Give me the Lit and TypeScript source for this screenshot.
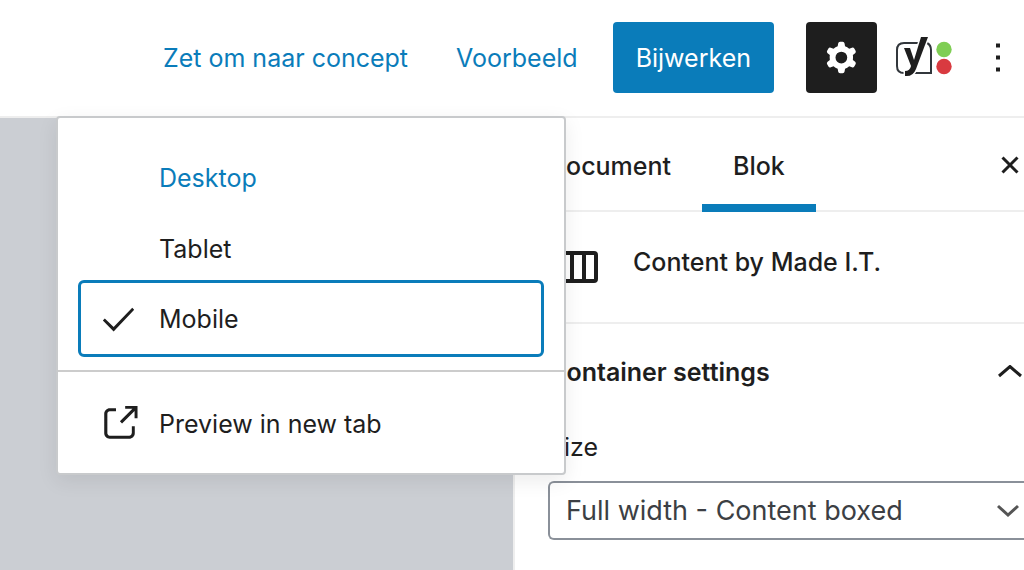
import { LitElement, html, css, svg } from "lit";
import { customElement, state } from "lit/decorators.js";
import { classMap } from "lit/directives/class-map.js";

const checkIcon = svg`<path d="M9 18.6L3.5 13l1-1L9 16.4l9.5-9.9 1 1z" />`;
const externalIcon = svg`<path d="M18.2 17c0 .7-.6 1.2-1.2 1.2H7c-.7 0-1.2-.6-1.2-1.2V7c0-.7.6-1.2 1.2-1.2h3.2V4.2H7C5.5 4.2 4.2 5.5 4.2 7v10c0 1.5 1.2 2.8 2.8 2.8h10c1.5 0 2.8-1.2 2.8-2.8v-3.6h-1.5V17zM14.9 3v1.5h3.7l-6.4 6.4 1.1 1.1 6.4-6.4v3.7h1.5V3h-6.3z" />`;
const cogIcon = svg`<path fill-rule="evenodd" d="M10.289 4.836A1 1 0 0111.275 4h1.306a1 1 0 01.987.836l.244 1.466c.787.26 1.503.679 2.108 1.218l1.393-.522a1 1 0 011.216.437l.653 1.13a1 1 0 01-.23 1.273l-1.148.944a6.025 6.025 0 010 2.435l1.149.946a1 1 0 01.23 1.272l-.653 1.13a1 1 0 01-1.216.437l-1.394-.522c-.605.54-1.32.958-2.108 1.218l-.244 1.466a1 1 0 01-.987.836h-1.306a1 1 0 01-.986-.836l-.244-1.466a5.995 5.995 0 01-2.108-1.218l-1.394.522a1 1 0 01-1.217-.436l-.653-1.131a1 1 0 01.23-1.272l1.149-.946a6.026 6.026 0 010-2.435l-1.148-.944a1 1 0 01-.23-1.272l.653-1.131a1 1 0 011.217-.437l1.393.522a5.994 5.994 0 012.108-1.218l.244-1.466zM14.929 12a3 3 0 11-6 0 3 3 0 016 0z" />`;

@customElement("app-root")
export class AppRoot extends LitElement {
  @state() private device = "Mobile";

  static styles = css`
    :host {
      display: flex;
      flex-direction: column;
      position: relative;
      min-height: 100vh;
      overflow: hidden;
      background: #fff;
      color: #1e1e1e;
      font: 25px/32px Inter, "Liberation Sans", sans-serif;
    }
    * {
      box-sizing: border-box;
    }
    button {
      padding: 0;
      border: 0;
      background: none;
      color: inherit;
      font: inherit;
      cursor: pointer;
    }
    svg {
      display: block;
      flex: none;
      fill: currentColor;
    }
    .icon {
      width: 47px;
      height: 47px;
    }
    .header {
      display: flex;
      align-items: center;
      justify-content: flex-end;
      height: 118px;
      padding: 0 14px 2px 0;
      border-bottom: 2px solid #eee;
    }
    .header .link {
      margin-right: 48px;
      padding-top: 2px;
      color: #0a7cba;
    }
    .header .preview {
      margin-right: 35px;
    }
    .header .primary {
      height: 71px;
      padding: 2px 23px 0;
      margin-right: 32px;
      border-radius: 4px;
      background: #0a7cba;
      color: #fff;
    }
    .header .settings {
      display: grid;
      place-items: center;
      width: 71px;
      height: 71px;
      margin-right: 18px;
      border-radius: 4px;
      background: #1e1e1e;
      color: #fff;
    }
    .header .seo {
      margin-right: 33px;
    }
    .main {
      display: flex;
      flex: 1;
    }
    .canvas {
      flex: 1;
      background: #cbced3;
    }
    .sidebar {
      width: 511px;
      border-left: 2px solid #eee;
    }
    .tabs {
      display: flex;
      align-items: stretch;
      height: 94px;
      padding-left: 2px;
      border-bottom: 2px solid #eee;
      font-weight: 500;
    }
    .tab {
      padding: 2px 31px 0;
      height: 94px;
    }
    .tab.active {
      border-bottom: 8px solid #0a7cba;
      padding-top: 10px;
    }
    .close {
      margin-left: auto;
      padding: 2px 4px 0 0;
    }
    .card {
      display: flex;
      align-items: flex-start;
      gap: 35px;
      height: 112px;
      padding: 34px 0 0 41px;
      border-bottom: 2px solid #eee;
    }
    .card svg {
      margin-top: 5px;
    }
    h2 {
      margin: 0;
      font-size: 25px;
      font-weight: 500;
      line-height: 32px;
    }
    .panel-title {
      display: flex;
      align-items: center;
      justify-content: space-between;
      width: 100%;
      padding: 32px 2px 0 33px;
      font-weight: 600;
    }
    .field {
      display: flex;
      flex-direction: column;
      gap: 18px;
      padding: 43px 0 0 33px;
    }
    .select {
      display: grid;
      align-items: center;
    }
    .select > * {
      grid-area: 1 / 1;
    }
    .select svg {
      justify-self: end;
      margin-right: 5px;
      color: #555;
      pointer-events: none;
    }
    select {
      appearance: none;
      width: 100%;
      height: 59px;
      padding: 0 40px 0 16px;
      border: 2px solid #8a9099;
      border-right: 0;
      border-radius: 6px 0 0 6px;
      background: #fff;
      color: #3c3f44;
      font: inherit;
      font-size: 27px;
    }
    .menu {
      position: absolute;
      top: 116px;
      left: 56px;
      width: 510px;
      border: 2px solid #c8cacc;
      border-radius: 4px;
      background: #fff;
      box-shadow: 0 6px 20px rgba(0, 0, 0, 0.08);
    }
    .group {
      padding: 24px 20px 13px;
    }
    .group + .group {
      padding: 16px 20px 14px;
      border-top: 2px solid #ccc;
    }
    .item {
      display: grid;
      grid-template-columns: 47px 1fr;
      align-items: center;
      column-gap: 16px;
      width: 100%;
      height: 71px;
      padding: 0 18px;
      text-align: left;
    }
    .item .label {
      grid-column: 2;
    }
    .item.hovered {
      color: #0a7cba;
    }
    .item.selected {
      height: 77px;
      margin-top: -4px;
      padding: 0 15px;
      border: 3px solid #0a7cba;
      border-radius: 6px;
    }
  `;

  private renderDevice(name: string) {
    const selected = this.device === name;
    return html`<button
      class=${classMap({ item: true, selected, hovered: name === "Desktop" })}
      role="menuitemradio"
      aria-checked=${selected}
      @click=${() => (this.device = name)}
    >
      ${selected ? html`<svg class="icon" viewBox="0 0 24 24">${checkIcon}</svg>` : ""}
      <span class="label">${name}</span>
    </button>`;
  }

  render() {
    return html`
      <header class="header">
        <button class="link">Zet om naar concept</button>
        <button class="link preview">Voorbeeld</button>
        <button class="primary">Bijwerken</button>
        <button class="settings" aria-label="Instellingen">
          <svg class="icon" viewBox="0 0 24 24">${cogIcon}</svg>
        </button>
        <button class="seo" aria-label="Yoast SEO">
          <svg width="58" height="44" viewBox="0 0 58 44">
            <path d="M25 8H9Q2 8 2 15v16q0 7 7 7h27V15q0-5-4-7" fill="none" stroke="#32373c" stroke-width="2" />
            <path d="M26 2h7L21 34q-3 8-11 7v-5q5 0 6-5L9 13h6l4 12z" stroke="#fff" stroke-width="3" paint-order="stroke" />
            <circle cx="49" cy="14.5" r="7.7" fill="#7fce54" />
            <circle cx="49" cy="31.5" r="7.7" fill="#d93a40" />
          </svg>
        </button>
        <button aria-label="Opties">
          <svg width="24" height="47" viewBox="0 0 24 47">
            <path d="M10 9.500h4v4h-4zM10 21.500h4v4h-4zM10 33.500h4v4h-4z" />
          </svg>
        </button>
      </header>
      <div class="main">
        <main class="canvas"></main>
        <aside class="sidebar">
          <div class="tabs">
            <button class="tab">Document</button>
            <button class="tab active">Blok</button>
            <button class="close" aria-label="Sluiten">
              <svg width="20" height="20" viewBox="0 0 20 20">
                <path d="M2.500 2.500l15 15M17.500 2.500l-15 15" fill="none" stroke="currentColor" stroke-width="3" />
              </svg>
            </button>
          </div>
          <section class="card">
            <svg width="42" height="32" viewBox="0 0 42 32">
              <path d="M4 2h34q2 0 2 2v24q0 2-2 2H4q-2 0-2-2V4q0-2 2-2zM16 2v28M28 2v28" fill="none" stroke="currentColor" stroke-width="4" />
            </svg>
            <h2>Content by Made I.T.</h2>
          </section>
          <button class="panel-title" aria-expanded="true">
            Container settings
            <svg width="24" height="14" viewBox="0 0 24 14">
              <path d="M1 11L12 1.500l11 9.500" fill="none" stroke="currentColor" stroke-width="3" />
            </svg>
          </button>
          <div class="field">
            <label for="size">Size</label>
            <div class="select">
              <select id="size">
                <option>Full width - Content boxed</option>
              </select>
              <svg width="22" height="14" viewBox="0 0 22 14">
                <path d="M1 2l10 9L21 2" fill="none" stroke="currentColor" stroke-width="3" />
              </svg>
            </div>
          </div>
        </aside>
      </div>
      <div class="menu" role="menu">
        <div class="group">${["Desktop", "Tablet", "Mobile"].map((n) => this.renderDevice(n))}</div>
        <div class="group">
          <button class="item" role="menuitem">
            <svg class="icon" viewBox="0 0 24 24">${externalIcon}</svg>
            <span class="label">Preview in new tab</span>
          </button>
        </div>
      </div>
    `;
  }
}
